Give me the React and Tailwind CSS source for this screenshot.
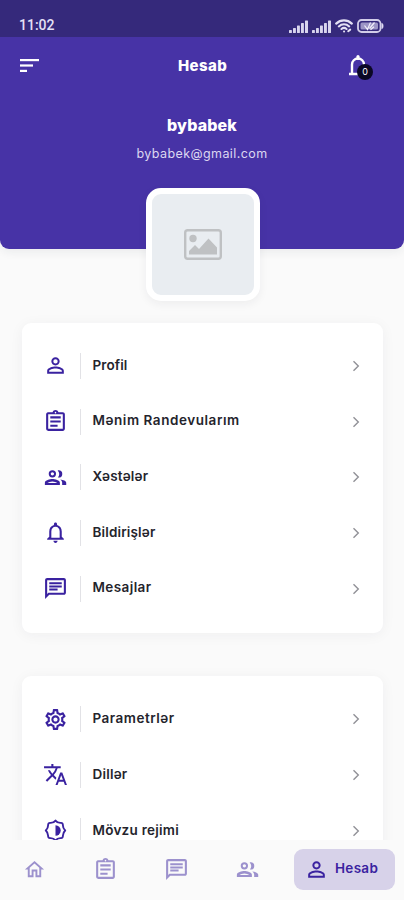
import React from "react";
import {
  MdPersonOutline,
  MdOutlineAssignment,
  MdNotificationsNone,
  MdOutlineChat,
  MdOutlineSettings,
  MdTranslate,
  MdOutlineHome,
} from "react-icons/md";

function Signal() {
  return (
    <svg width="19" height="13" viewBox="0 0 19 13" fill="#d9d5ee">
      <rect x="0" y="10" width="2.9" height="3" rx="0.6" />
      <rect x="4" y="8" width="2.9" height="5" rx="0.6" />
      <rect x="8" y="5.5" width="2.9" height="7.5" rx="0.6" />
      <rect x="12" y="3" width="2.9" height="10" rx="0.6" />
      <rect x="16" y="0.5" width="3" height="12.5" rx="0.6" />
    </svg>
  );
}

function Wifi() {
  return (
    <svg width="18" height="14" viewBox="0 0 18 14" fill="none" stroke="#e3e0f4" strokeLinecap="round">
      <path d="M1.2 4.6C5.6.4 12.4.4 16.8 4.6" strokeWidth="2.2" />
      <path d="M3.8 7.4c3-2.8 7.4-2.8 10.4 0" strokeWidth="2.1" />
      <path d="M6.4 10c1.6-1.4 3.6-1.4 5.2 0" strokeWidth="2" />
      <path d="M9 12.4h.1" strokeWidth="2" />
      <path d="M13.2 12.2l2-1.6" strokeWidth="2" />
    </svg>
  );
}

function Battery() {
  return (
    <svg width="27" height="14" viewBox="0 0 27 14">
      <rect x="1" y="1" width="22.5" height="12" rx="3.5" fill="none" stroke="#d2cde9" strokeWidth="1.8" />
      <rect x="3.5" y="3.4" width="17.5" height="7.2" rx="1.5" fill="#9c94c5" />
      <path d="M25 4.5c1.3.6 1.3 4.4 0 5z" fill="#e3e0f4" stroke="#e3e0f4" />
      <path d="M7.500 6.500l3 4 3-7M12.500 9.500l5-6M13.500 10.800l3.500-3" fill="none" stroke="#f0eefa" strokeWidth="1.200" />
    </svg>
  );
}

function People({ className }) {
  return (
    <svg className={className} viewBox="0 0 24 24" fill="currentColor">
      <path
        fillRule="evenodd"
        d="M9 12a3.500 3.500 0 1 0 0-7 3.500 3.500 0 0 0 0 7zm0-5.100a1.600 1.600 0 1 1 0 3.200 1.600 1.600 0 0 1 0-3.200z"
      />
      <path
        fillRule="evenodd"
        d="M9 13.500c-2.400 0-7.200 1.200-7.200 3.600V19.200h14.400v-2.100c0-2.400-4.800-3.600-7.200-3.600zM4.300 17.300c.9-.7 2.900-1.500 4.700-1.500s3.800.8 4.700 1.500z"
      />
      <path d="M14.300 12c.24.040.46.060.7.060a3.500 3.500 0 0 0 0-7c-.3 0-.6.040-.9.100A5.400 5.400 0 0 1 14.300 12z" />
      <path d="M16.600 13.800c1.200.8 1.800 1.900 1.800 3.300v2.100h3.900v-2.100c0-1.900-3-3-5.700-3.300z" />
    </svg>
  );
}

function Theme({ className }) {
  return (
    <svg className={className} viewBox="0 0 24 24">
      <path
        d="M12 2.500Q14 5 17.300 4.700Q19 4.700 19.100 6.700Q19 9.800 21.300 12Q19 14.200 19.100 17.300Q19 19.300 17.300 19.300Q14 19 12 21.500Q10 19 6.700 19.300Q5 19.300 4.900 17.300Q5 14.200 2.700 12Q5 9.800 4.900 6.700Q5 4.700 6.700 4.700Q10 5 12 2.500z"
        fill="none"
        stroke="currentColor"
        strokeWidth="1.8"
        strokeLinejoin="round"
      />
      <path d="M12 7a5 5 0 0 1 0 10z" fill="currentColor" />
    </svg>
  );
}

const account = [
  { icon: MdPersonOutline, label: "Profil", tracking: "tracking-[0.1px]" },
  { icon: MdOutlineAssignment, label: "Mənim Randevularım", tracking: "tracking-[0.55px]" },
  { icon: People, label: "Xəstələr", tracking: "tracking-[0.2px]" },
  { icon: MdNotificationsNone, label: "Bildirişlər", tracking: "tracking-[0.15px]" },
  { icon: MdOutlineChat, label: "Mesajlar", tracking: "tracking-[0.4px]" },
];

const settings = [
  { icon: MdOutlineSettings, label: "Parametrlər", tracking: "tracking-[0.5px]" },
  { icon: MdTranslate, label: "Dillər", tracking: "tracking-[0.2px]" },
  { icon: Theme, label: "Mövzu rejimi", tracking: "tracking-[0.25px]" },
];

function Row({ icon: Icon, label, tracking }) {
  return (
    <div className="flex h-[55.7px] items-center pl-[21px] pr-[22px]">
      <Icon className="size-[25px] shrink-0 text-[#3a22a0]" />
      <span className="ml-[12px] h-[26px] w-px bg-[#e2e2e6]" />
      <span className={"ml-3 flex-1 -translate-y-[1.5px] whitespace-nowrap text-[13.500px] font-semibold text-[#24242c] " + tracking}>
        {label}
      </span>
      <svg className="h-3 w-2.5" viewBox="0 0 10 12" fill="none" stroke="#919197" strokeWidth="1.4">
        <path d="M2.500 1.200L7.300 6l-4.800 4.800" />
      </svg>
    </div>
  );
}

function Card({ items }) {
  return (
    <section className="mx-auto w-[361px] shrink-0 rounded-[9px] bg-white pb-[17px] pt-[15px] shadow-[0_2px_14px_rgba(30,40,50,0.05)]">
      {items.map((item) => (
        <Row key={item.label} {...item} />
      ))}
    </section>
  );
}

export default function App() {
  return (
    <div className="flex h-[900px] w-[404px] flex-col overflow-hidden bg-[#fafafa] font-['Inter','Noto_Sans',sans-serif]">
      <main className="flex h-[840px] shrink-0 flex-col overflow-hidden">
        <header className="h-[249px] shrink-0 rounded-b-[9px] bg-[#4733a6] text-white shadow-[0_3px_10px_rgba(30,40,50,0.07)]">
          <div className="flex h-[37px] items-end justify-between bg-[#35297b] pb-[4px] pl-[19px] pr-[20px]">
            <span className="font-['Roboto',sans-serif] text-[14px] font-medium leading-[16px] text-[#e4e0f5]">11:02</span>
            <div className="flex items-center gap-[4px]">
              <Signal />
              <Signal />
              <Wifi />
              <Battery />
            </div>
          </div>
          <div className="grid h-[57px] grid-cols-3 items-center pl-[20px] pr-[33px]">
            <svg width="20" height="15" viewBox="0 0 20 15" fill="#fff">
              <rect x="0" y="1" width="19" height="2.200" />
              <rect x="0" y="6.400" width="13" height="2.200" />
              <rect x="0" y="11.800" width="7" height="2.200" />
            </svg>
            <h1 className="translate-x-[7px] text-center text-[15px] font-extrabold leading-5 tracking-[0.4px]">Hesab</h1>
            <div className="relative size-6 justify-self-end">
              <svg className="size-6" viewBox="0 0 24 24" fill="none" stroke="#fff" strokeWidth="2.400">
                <path d="M2 20h18M5 20v-9.500a6 6 0 0 1 12 0V20" />
                <path d="M11 2.500v2" strokeWidth="3.200" strokeLinecap="round" />
              </svg>
              <span className="absolute left-[10px] top-[10px] flex size-4 items-center justify-center rounded-full bg-[#0b0825] text-[9px] leading-none text-white">
                0
              </span>
            </div>
          </div>
          <div className="flex flex-col items-center pt-[20px]">
            <h2 className="text-[16px] font-extrabold leading-[22px] tracking-[0.15px]">bybabek</h2>
            <p className="mt-[9px] text-[12.500px] leading-[18px] tracking-[0.42px] text-[#dcd7f1]">bybabek@gmail.com</p>
            <div className="ml-px mt-[25px] flex h-[113px] w-[114px] shrink-0 items-center justify-center rounded-[15px] border-[6px] border-white bg-[#e9edf1] shadow-[0_3px_10px_rgba(30,40,50,0.06)]">
              <svg width="38" height="31" viewBox="0 0 38 31">
                <rect x="1.200" y="1.200" width="35.600" height="28.600" rx="2.500" fill="none" stroke="#bfc1c3" strokeWidth="2.400" />
                <circle cx="9" cy="9.500" r="3.700" fill="#bfc1c3" />
                <path d="M5 25.500v-3.500l6-6 4 4 9.500-10.500 8.500 9v7z" fill="#bfc1c3" />
              </svg>
            </div>
          </div>
        </header>
        <div className="mt-[74px] flex shrink-0 flex-col gap-[43px]">
          <Card items={account} />
          <Card items={settings} />
        </div>
      </main>
      <nav className="flex h-[60px] shrink-0 items-center bg-[#fafafa] pb-px pl-[23px] text-[#9c91cd]">
        <MdOutlineHome className="size-[23px]" />
        <MdOutlineAssignment className="ml-[47px] size-[25px]" />
        <MdOutlineChat className="ml-[46px] size-[25px]" />
        <People className="ml-[46px] size-[25px]" />
        <div className="ml-[34px] flex h-[41px] w-[101px] items-center rounded-[9px] bg-[#d7d2e9] pl-[10px] text-[#3a22a0]">
          <MdPersonOutline className="size-[25px]" />
          <span className="ml-[6px] -translate-y-px text-[13.500px] font-semibold tracking-[0.3px]">Hesab</span>
        </div>
      </nav>
    </div>
  );
}
